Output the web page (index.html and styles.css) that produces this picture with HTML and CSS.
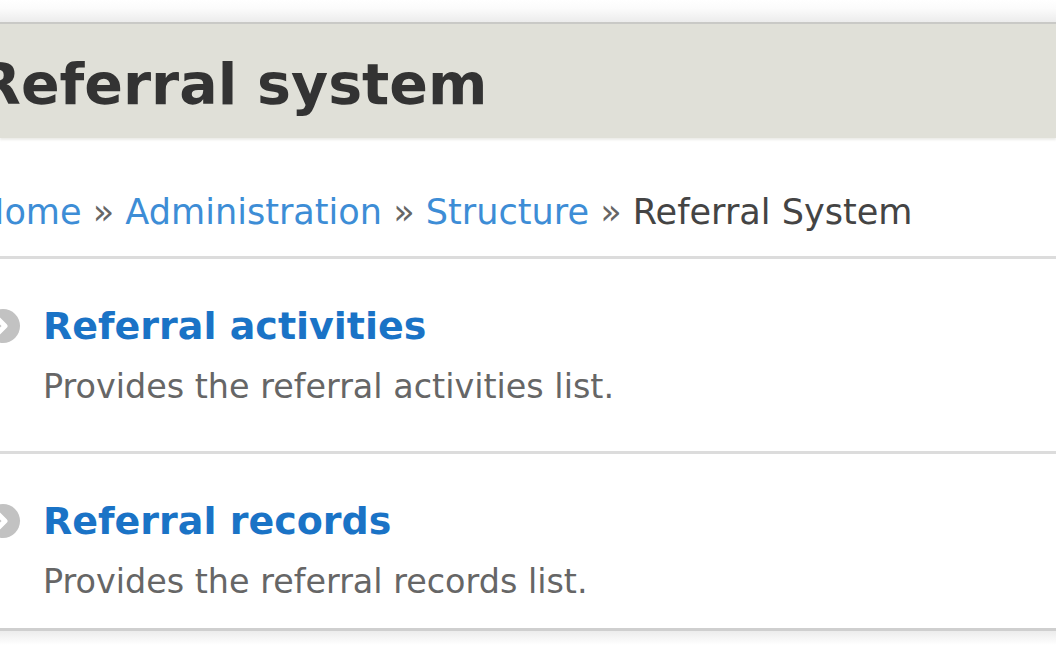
FILE: index.html
```html
<!DOCTYPE html>
<html>
<head>
<meta charset="utf-8">
<link rel="stylesheet" href="styles.css">
</head>
<body>
<div class="page">
  <div class="top-shadow"></div>
  <header class="title-bar">
    <h1 class="page-title">Referral system</h1>
  </header>
  <nav class="breadcrumb">
    <a href="#">Home</a><span class="sep"> » </span><a href="#">Administration</a><span class="sep"> » </span><a href="#">Structure</a><span class="sep"> » </span><span class="current">Referral System</span>
  </nav>
  <ul class="admin-list">
    <li class="admin-item">
      <span class="bullet"><svg viewBox="0 0 36 36" width="36" height="36"><circle cx="18" cy="18" r="17" fill="#c2c2c2"/><path d="M12 10 L20 18 L12 26" fill="none" stroke="#fff" stroke-width="5" stroke-linecap="round" stroke-linejoin="round"/></svg></span>
      <div class="item-body">
        <a class="item-title" href="#">Referral activities</a>
        <div class="item-desc">Provides the referral activities list.</div>
      </div>
    </li>
    <li class="admin-item">
      <span class="bullet"><svg viewBox="0 0 36 36" width="36" height="36"><circle cx="18" cy="18" r="17" fill="#c2c2c2"/><path d="M12 10 L20 18 L12 26" fill="none" stroke="#fff" stroke-width="5" stroke-linecap="round" stroke-linejoin="round"/></svg></span>
      <div class="item-body">
        <a class="item-title" href="#">Referral records</a>
        <div class="item-desc">Provides the referral records list.</div>
      </div>
    </li>
  </ul>
  <div class="bottom-shadow"></div>
</div>
</body>
</html>
```

FILE: styles.css
```css
html, body {
  margin: 0;
  padding: 0;
  background: #fff;
}
body {
  font-family: "DejaVu Sans", Verdana, sans-serif;
  width: 1056px;
  height: 657px;
  overflow: hidden;
}
.page {
  display: flex;
  flex-direction: column;
}
.top-shadow {
  height: 22px;
  background: linear-gradient(to bottom, #fff 0%, #fbfbfb 40%, #ececec 100%);
  border-bottom: 2px solid #c9c9c6;
}
.title-bar {
  background: #e0e0d8;
  height: 114px;
  display: flex;
  align-items: center;
  box-shadow: 0 2px 2px rgba(200, 200, 190, 0.35);
}
.page-title {
  margin: 0 0 0 -23px;
  font-size: 57px;
  font-weight: bold;
  color: #333;
  line-height: 1;
  padding-top: 6px;
}
.breadcrumb {
  margin: 0 0 0 -22px;
  padding: 54px 0 0 0;
  height: 64px;
  font-size: 35.1px;
  line-height: 40px;
  color: #444;
  border-bottom: 3px solid #dcdcdc;
}
.breadcrumb a {
  color: #3d8dd6;
  text-decoration: none;
}
.breadcrumb .sep {
  color: #666;
}
.breadcrumb .current {
  color: #444;
}
.admin-list {
  list-style: none;
  margin: 0;
  padding: 0;
}
.admin-item {
  display: flex;
  align-items: flex-start;
  height: 192px;
  border-bottom: 3px solid #dcdcdc;
}
.admin-item:last-child {
  height: 174px;
  border-bottom-color: #cfcfcf;
}
.bullet {
  display: block;
  margin: 49px 0 0 -15px;
  width: 36px;
  height: 36px;
  flex: none;
}
.item-body {
  margin-left: 22px;
  padding-top: 44px;
}
.item-title {
  display: block;
  font-size: 38px;
  font-weight: bold;
  color: #1a73c6;
  text-decoration: none;
  line-height: 46px;
}
.item-desc {
  margin-top: 18px;
  font-size: 33.4px;
  line-height: 40px;
  color: #666;
}
.bottom-shadow {
  height: 14px;
  background: linear-gradient(to bottom, #ececec 0%, #fff 100%);
}
```
